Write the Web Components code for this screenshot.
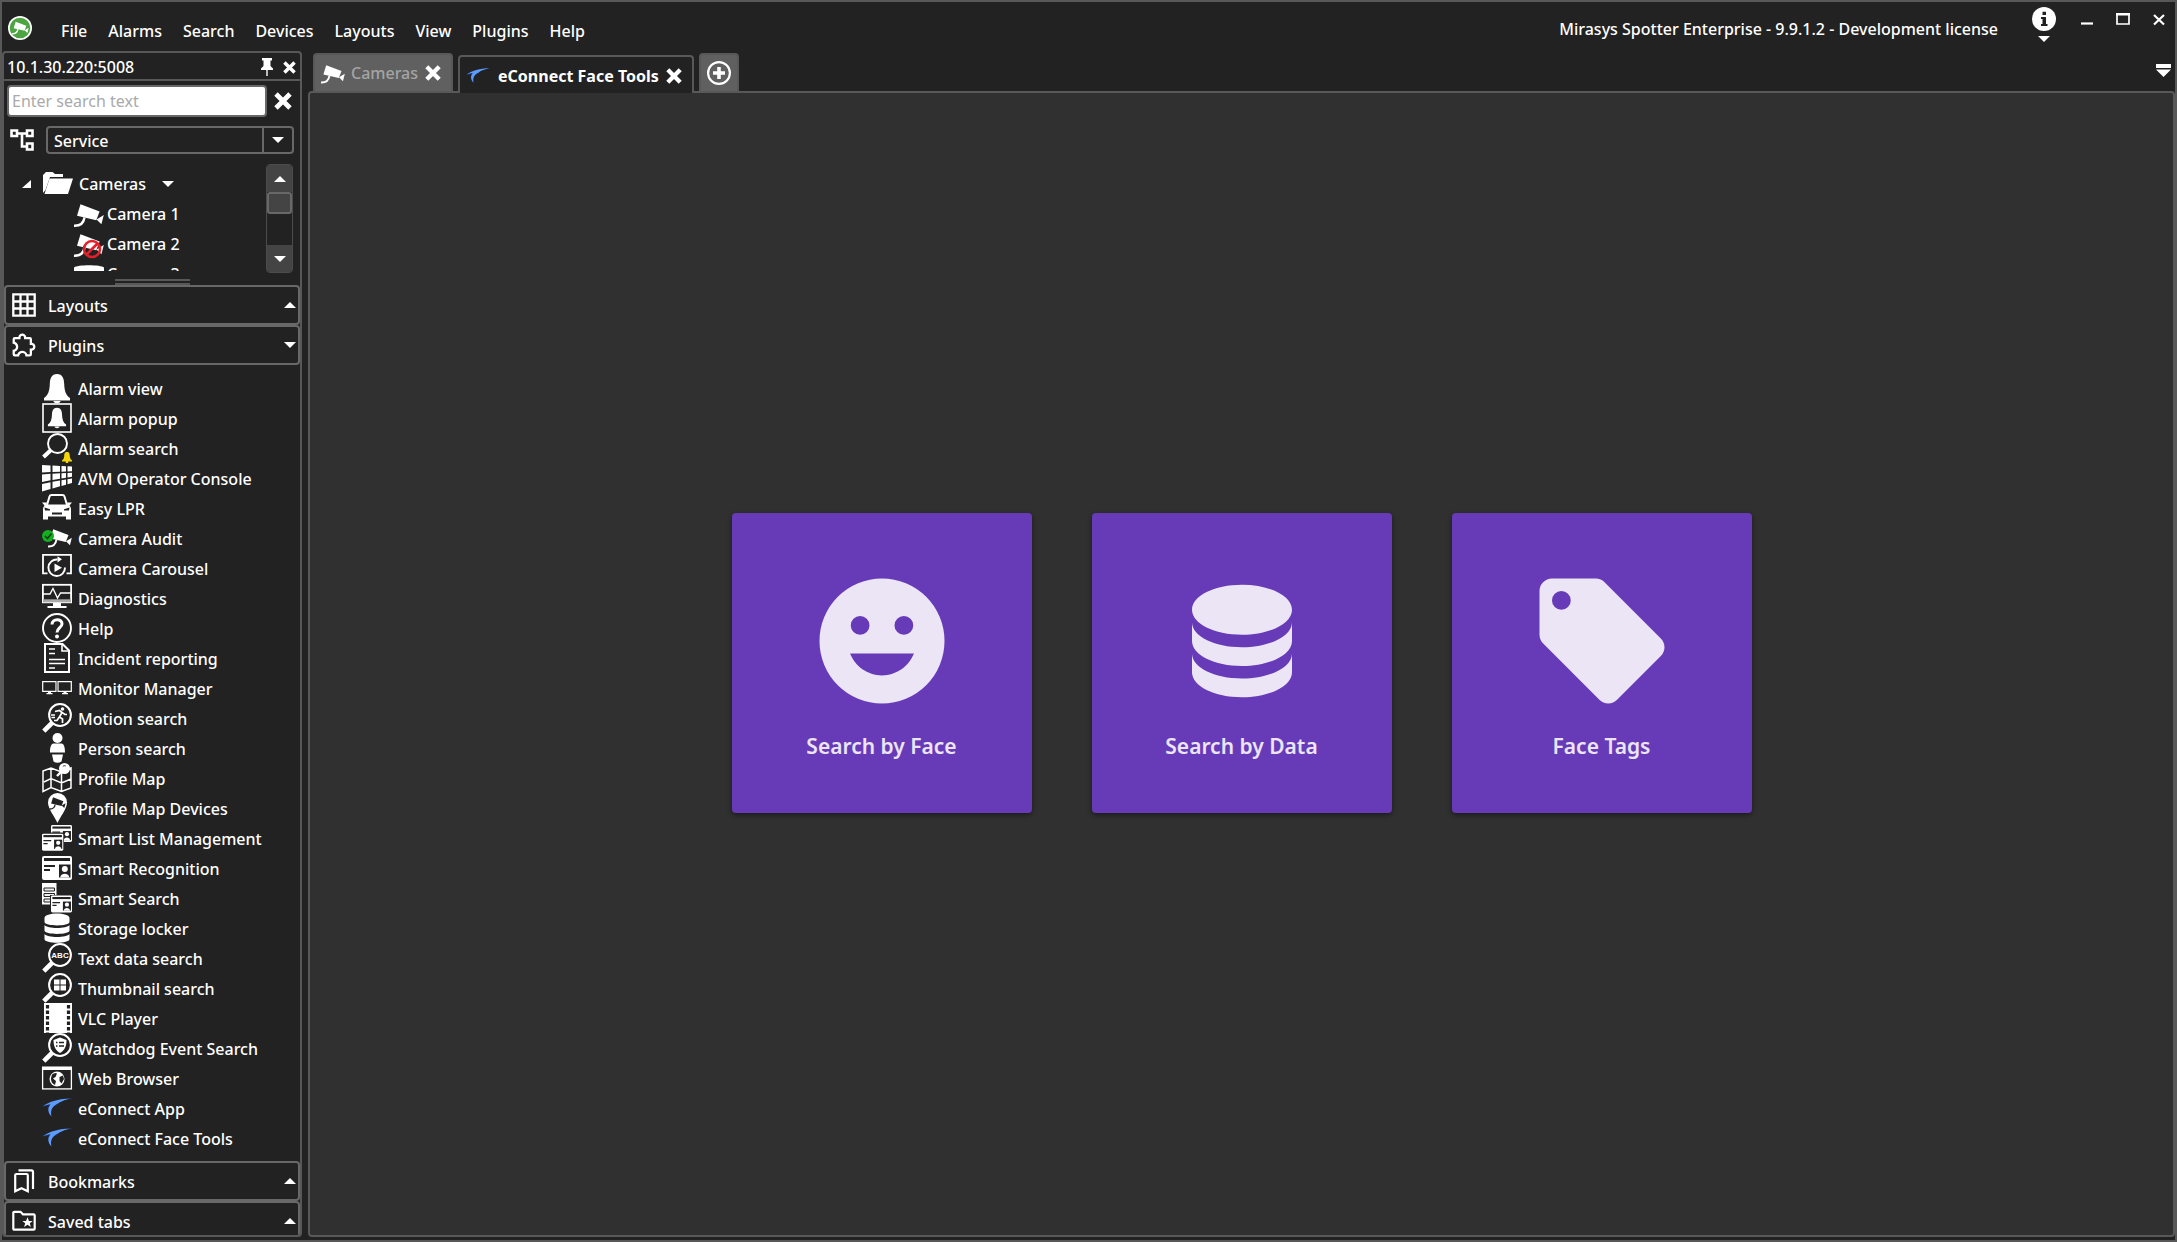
<!DOCTYPE html>
<html lang="en">
<head>
<meta charset="utf-8">
<title>Mirasys Spotter Enterprise</title>
<style>
  :root {
    --bg: #222222;
    --pane: #303030;
    --line: #585858;
    --line-soft: #686868;
    --raised: #444444;
    --tab: #606060;
  }
  html, body { height: 100%; }
  body {
    margin: 0;
    background: var(--bg);
    color: #fff;
    font: 500 16px/22px "Noto Sans", "Open Sans", sans-serif;
  }
</style>
</head>
<body>
<spotter-window>
  <title-bar slot="title">
    <menu-item>File</menu-item>
    <menu-item>Alarms</menu-item>
    <menu-item>Search</menu-item>
    <menu-item>Devices</menu-item>
    <menu-item>Layouts</menu-item>
    <menu-item>View</menu-item>
    <menu-item>Plugins</menu-item>
    <menu-item>Help</menu-item>
    <span slot="caption">Mirasys Spotter Enterprise - 9.9.1.2 - Development license</span>
  </title-bar>

  <side-panel slot="side">
    <span slot="heading">10.1.30.220:5008</span>
    <device-search slot="filter"></device-search>
    <device-tree slot="filter">
      <tree-node icon="folder" branch>Cameras</tree-node>
      <tree-node icon="camera">Camera 1</tree-node>
      <tree-node icon="camera-off">Camera 2</tree-node>
      <tree-node icon="dome">Camera 3</tree-node>
    </device-tree>
    <accordion-section icon="grid"><span slot="label">Layouts</span></accordion-section>
    <accordion-section icon="puzzle" open>
      <span slot="label">Plugins</span>
      <plugin-item icon="bell">Alarm view</plugin-item>
      <plugin-item icon="bell-box">Alarm popup</plugin-item>
      <plugin-item icon="alarm-search">Alarm search</plugin-item>
      <plugin-item icon="wall">AVM Operator Console</plugin-item>
      <plugin-item icon="car">Easy LPR</plugin-item>
      <plugin-item icon="audit">Camera Audit</plugin-item>
      <plugin-item icon="carousel">Camera Carousel</plugin-item>
      <plugin-item icon="diagnostics">Diagnostics</plugin-item>
      <plugin-item icon="help">Help</plugin-item>
      <plugin-item icon="report">Incident reporting</plugin-item>
      <plugin-item icon="monitors">Monitor Manager</plugin-item>
      <plugin-item icon="motion">Motion search</plugin-item>
      <plugin-item icon="person">Person search</plugin-item>
      <plugin-item icon="map">Profile Map</plugin-item>
      <plugin-item icon="map-pin">Profile Map Devices</plugin-item>
      <plugin-item icon="cards">Smart List Management</plugin-item>
      <plugin-item icon="card">Smart Recognition</plugin-item>
      <plugin-item icon="card-search">Smart Search</plugin-item>
      <plugin-item icon="storage">Storage locker</plugin-item>
      <plugin-item icon="text-search">Text data search</plugin-item>
      <plugin-item icon="thumb-search">Thumbnail search</plugin-item>
      <plugin-item icon="film">VLC Player</plugin-item>
      <plugin-item icon="watchdog">Watchdog Event Search</plugin-item>
      <plugin-item icon="browser">Web Browser</plugin-item>
      <plugin-item icon="swoosh">eConnect App</plugin-item>
      <plugin-item icon="swoosh">eConnect Face Tools</plugin-item>
    </accordion-section>
    <accordion-section icon="bookmarks"><span slot="label">Bookmarks</span></accordion-section>
    <accordion-section icon="folder-star"><span slot="label">Saved tabs</span></accordion-section>
  </side-panel>

  <tab-strip slot="tabs">
    <tab-item icon="camera">Cameras</tab-item>
    <tab-item icon="swoosh" active>eConnect Face Tools</tab-item>
  </tab-strip>

  <action-card slot="content" icon="face">Search by Face</action-card>
  <action-card slot="content" icon="database">Search by Data</action-card>
  <action-card slot="content" icon="tag">Face Tags</action-card>
</spotter-window>

<script>
const CAMERA = `<path d="M6.5 5.3 25.6 12.6 22.3 21.3 3 16.8Z"/><path d="M22.5 20.4 29.8 16 27.4 25.2Z"/>
  <path d="M0 26.8C5 27 9.500 25 10.500 18.500" fill="none" stroke="currentColor" stroke-width="2.400"/>`;
const BELL = `<path d="M15 1C9.500 1 8 5.500 7.800 11 7.600 18 6 22.500 2 25V27.400H28V25C24 22.500 22.400 18 22.200 11 22 5.500 20.500 1 15 1Z"/><path d="M11.500 28H18.500C18.500 31 11.500 31 11.500 28Z"/>`;
const LENS = `<path d="M1.800 28.200 10.500 19.500" stroke="currentColor" stroke-width="4.600" fill="none"/>
  <circle cx="18" cy="12" r="10.900" fill="none" stroke="currentColor" stroke-width="2"/>`;
const ID_CARD = `<rect x="0" y="3" width="30" height="24" rx="2"/>
  <path d="M2 6.500H28" stroke="#222" stroke-width="3"/>
  <path d="M2 13H13M2 17H8" stroke="#222" stroke-width="1.800"/>
  <rect x="17" y="11.500" width="11.500" height="13" fill="#222"/>
  <circle cx="22.800" cy="16" r="3"/><path d="M18.300 24.500C18.300 19.500 27.200 19.500 27.200 24.500Z"/>`;
const DRUM = `M12,3C7.580,3 4,4.790 4,7C4,9.210 7.580,11 12,11C16.420,11 20,9.210 20,7C20,4.790 16.420,3 12,3M4,9V12C4,14.210 7.580,16 12,16C16.420,16 20,14.210 20,12V9C20,11.210 16.420,13 12,13C7.580,13 4,11.210 4,9M4,14V17C4,19.210 7.580,21 12,21C16.420,21 20,19.210 20,17V14C20,16.210 16.420,18 12,18C7.580,18 4,16.210 4,14Z`;
const S = 'fill="none" stroke="currentColor"';

/* name: [viewBox, markup] */
const ICONS = {
  'logo': ['0 0 24 24', `<circle cx="12" cy="12" r="12"/><circle cx="12" cy="12" r="10.300" fill="#4ca541"/><g transform="translate(4 2.800) scale(.56)">${CAMERA}</g>`],
  'camera': ['0 0 30 30', CAMERA],
  'camera-off': ['0 0 30 30', `${CAMERA}<circle cx="18" cy="20" r="8" fill="none" stroke="#e3202b" stroke-width="2.600"/><path d="M12.500 25.500 23.500 14.500" stroke="#e3202b" stroke-width="2.600"/>`],
  'dome': ['0 0 30 30', `<path d="M0 12V8.500C3 5.500 27 5.500 30 8.500V12Z"/><path d="M4 13H26C26 25 4 25 4 13Z"/>`],
  'folder': ['0 0 30 30', `<path d="M0 24V6L3 3H9.500L12 5H20V8H7L2.500 21Z"/><path d="M6.500 9.500H30L25 25H1.500Z"/>`],
  'tree': ['0 0 24 24', `<path d="M1.500 2.500H7V8H1.500ZM17 2.500H22.500V8H17ZM17 15.500H22.500V21.500H17ZM7.500 5.500H16.500M12 5.500V18.500H16.500" ${S} stroke-width="2.600"/>`],
  'grid': ['0 0 24 24', `<path d="M1.300 1.300H22.700V22.700H1.300ZM8.500 1V23M15.500 1V23M1 8.500H23M1 15.500H23" ${S} stroke-width="2.300"/>`],
  'puzzle': ['1.500 1.500 21 21', `<path d="M22,13.500C22,15.260 20.700,16.720 19,16.960V20A2,2 0 0,1 17,22H13.200V21.700A2.700,2.700 0 0,0 10.500,19C9,19 7.800,20.210 7.800,21.700V22H4A2,2 0 0,1 2,20V16.200H2.300C3.790,16.200 5,15 5,13.500C5,12 3.790,10.800 2.300,10.800H2V7A2,2 0 0,1 4,5H7.040C7.280,3.300 8.740,2 10.500,2C12.260,2 13.720,3.300 13.960,5H17A2,2 0 0,1 19,7V10.040C20.700,10.280 22,11.740 22,13.500M17,15H18.500A1.500,1.500 0 0,0 20,13.500A1.500,1.500 0 0,0 18.500,12H17V7H12V5.500A1.500,1.500 0 0,0 10.500,4A1.500,1.500 0 0,0 9,5.500V7H4V9.120C5.760,9.800 7,11.500 7,13.500C7,15.500 5.750,17.200 4,17.880V20H6.120C6.800,18.250 8.500,17 10.500,17C12.500,17 14.200,18.250 14.880,20H17V15Z"/>`],
  'bookmarks': ['0 0 24 24', `<path d="M3.200 6.200Q3.200 5 4.400 5H14.600Q15.800 5 15.800 6.200V22.300L9.500 19.200 3.200 22.300ZM6.500 1.300H19.400Q21 1.300 21 3V20" ${S} stroke-width="2.200"/>`],
  'folder-star': ['0 0 24 24', `<path d="M1.300 4Q1.300 2.800 2.500 2.800H8.500L11 5.300H21.500Q22.700 5.300 22.700 6.500V19.500Q22.700 20.700 21.500 20.700H2.500Q1.300 20.700 1.300 19.500Z" ${S} stroke-width="2.200"/><path d="M15.500 8.200 17 12H20.700L17.800 14.300 18.900 18 15.500 15.800 12.100 18 13.200 14.300 10.300 12H14Z"/>`],
  'bell': ['0 0 30 30', BELL],
  'bell-box': ['0 0 30 30', `<rect x="1" y="1" width="28" height="28" ${S} stroke-width="1.600"/><g transform="translate(4.500 4) scale(.7)">${BELL}</g>`],
  'alarm-search': ['0 0 30 30', `<path d="M1.500 24 9 17" ${S} stroke-width="4"/><circle cx="15.500" cy="10.500" r="9.500" ${S} stroke-width="1.900"/><path d="M25 19C22.500 19 22.300 21 22.200 23.500Q22 26 20 27.500V28.500H30V27.500Q28 26 27.800 23.500C27.700 21 27.500 19 25 19ZM23.800 28.500H26.200V30H23.800Z" fill="#f4d40b"/>`],
  'wall': ['0 0 30 30', `<path d="M0 2 8.500 2.500V9L0 9.500ZM10.500 2.500 18 3V8.800L10.500 9ZM19.500 3 24 3.200V8.500L19.500 8.700ZM25.500 3.300 30 3.500V8.200L25.500 8.400ZM0 11.500 8.500 10.800V17.300L0 19ZM10.500 10.700 18 10.300V15.800L10.500 17ZM19.500 10.200 24 10V14.700L19.500 15.600ZM25.500 9.900 30 9.700V13.800L25.500 14.500ZM0 21 8.500 19.200V26L0 28.500ZM10.500 18.800 18 17.500V23.300L10.500 25.500ZM19.500 17.200 24 16.500V21.700L19.500 23ZM25.500 16.200 30 15.500V20L25.500 21.300Z"/>`],
  'car': ['0 0 30 30', `<path d="M5 12 7.500 3.500Q8 2 9.500 2H20.500Q22 2 22.500 3.500L25 12" ${S} stroke-width="2"/><path d="M0 9.500H5L4.500 11.500H25.500L25 9.500H30L27.500 12.500Q29 14 29 16V26.500H24V23.500H6V26.500H1V16Q1 14 2.500 12.500Z"/><path d="M2.500 14.500 8 16.200V17.500H3ZM27.500 14.500 22 16.200V17.500H27ZM10 19.500H20V21.500H10Z" fill="#222"/>`],
  'audit': ['0 0 30 30', `<g transform="translate(6 2) scale(.8)">${CAMERA}</g><circle cx="6" cy="13" r="6" fill="#12b01f"/><path d="M3 13 5.500 15.500 9.500 10.500" fill="none" stroke="#123f14" stroke-width="1.700"/>`],
  'carousel': ['0 0 30 30', `<path d="M5.500 20.300H1V1.800H29V20.300H24.500" ${S} stroke-width="1.800"/><path d="M15.500 6.500A8.300 8.300 0 1 0 23 14.500" ${S} stroke-width="1.900"/><path d="M15.500 3.200 20 6.200 15.500 9.500ZM12.500 10.500 20 14.800 12.500 19Z"/>`],
  'diagnostics': ['0 0 30 30', `<rect x=".900" y="1.800" width="28.200" height="17.500" ${S} stroke-width="1.800"/><path d="M1 17.800H29" stroke="#aaa" stroke-width="3"/><path d="M1 11H8L11 5.500 15.500 15 18.500 10H29" ${S} stroke-width="1.400"/><path d="M11 20H19V23H24.500V25H5.500V23H11Z"/>`],
  'help': ['0 0 30 30', `<circle cx="15" cy="15" r="14" ${S} stroke-width="1.900"/><path d="M10 11.500C10 5 20.300 5.200 20 11 19.800 14.500 15 15 15 19.500" ${S} stroke-width="3"/><circle cx="15" cy="23.500" r="2"/>`],
  'report': ['0 0 30 30', `<path d="M3 1H20.500L27 7.500V29H3Z" ${S} stroke-width="2"/><path d="M20 1V8H27" ${S} stroke-width="1.600"/><path d="M7 6H13M7 10.500H13M7 16.500H23M7 20.500H23M7 25H13" ${S} stroke-width="1.700"/>`],
  'monitors': ['0 0 30 30', `<path d="M.700 8.700H14V18.300H.700ZM16 8.700H29.300V18.300H16Z" ${S} stroke-width="1.200"/><path d="M15 8V19" stroke="#999" stroke-width="2"/><path d="M6 18.500H9V20H10.500V21.300H4.500V20H6ZM21.500 18.500H24.500V20H26V21.300H20V20H21.500Z"/>`],
  'motion': ['0 0 30 30', `${LENS}<circle cx="20.500" cy="6" r="1.800"/><path d="M13 8.500 17.500 7.500 20 9.500 17.500 14 20.500 16V20M18 13 15 17.500H12M20 9.500 23 11.500H25M9 12H13M9.500 14.500H13" ${S} stroke-width="1.700"/>`],
  'person': ['0 0 30 30', `<circle cx="15.500" cy="5" r="5"/><path d="M11.500 10.500H19.500C22 11 23 14 23 19.500H8C8 14 9 11 11.500 10.500ZM10 21.500H21L19.500 28.500Q15.500 31 11.500 28.500Z"/>`],
  'map': ['0 0 30 30', `<path d="M1 8 9 5 19.500 9 29 5V25L19.500 28.500 9 24.500 1 28.500ZM9 5.500V24.500M19.500 9V28M2 19 9 15.500 19.500 20 29 16" ${S} stroke-width="1.500"/><circle cx="22.500" cy="5.500" r="5.500"/><path d="M19 9 15 13" ${S} stroke-width="2.400"/><path d="M21 3.500Q22 2 24 3" fill="none" stroke="#777" stroke-width="1.200"/>`],
  'map-pin': ['0 0 30 30', `<path d="M15.500 0A9.500 9.500 0 0 1 25 9.500C25 16 18 24 15.500 30 13 24 6 16 6 9.500A9.500 9.500 0 0 1 15.500 0Z"/><g transform="translate(7.500 1.500) scale(.54)" color="#222" fill="#222">${CAMERA}</g>`],
  'cards': ['0 0 30 30', `<g transform="translate(9 0) scale(.7)">${ID_CARD}</g><rect x="-1" y="9.500" width="23" height="18.500" rx="1.500" fill="#222"/><g transform="translate(0 8.500) scale(.71)">${ID_CARD}</g>`],
  'card': ['0 0 30 30', ID_CARD],
  'card-search': ['0 0 30 30', `<path d="M0 0H14.500V21.500H0Z"/><path d="M2 5H12.500V8H2ZM2 10.500H12.500V13.500H2ZM2 16H12.500V19H2Z" fill="#eee" stroke="#222" stroke-width="1"/><rect x="8" y="12" width="22" height="18" fill="#222"/><g transform="translate(9 10.500) scale(.7)">${ID_CARD}</g>`],
  'storage': ['0 0 30 30', `<path d="M2.500 5C2.500-1 27.500-1 27.500 5V9C27.500 13.500 2.500 13.500 2.500 9ZM2.500 12C5 16 25 16 27.500 12V17.500C27.500 22 2.500 22 2.500 17.500ZM2.500 21C5 25 25 25 27.500 21V26C27.500 31 2.500 31 2.500 26Z"/>`],
  'text-search': ['0 0 30 30', `${LENS}<text x="18" y="14.800" text-anchor="middle" font-family="Liberation Sans" font-weight="700" font-size="8">ABC</text>`],
  'thumb-search': ['0 0 30 30', `${LENS}<path d="M12 6.500H17.500V11.500H12ZM18.500 6.500H24V11.500H18.500ZM12 12.500H17.500V17.500H12ZM18.500 12.500H24V17.500H18.500Z"/>`],
  'film': ['0 0 30 30', `<path d="M2 0H30V30H2Z"/><path d="M5.500 2V30M26.500 2V30" stroke="#222" stroke-width="3.200" stroke-dasharray="3.500 2"/>`],
  'watchdog': ['0 0 30 30', `${LENS}<path d="M18 4.500 24.500 7C24.500 13.500 22.500 17.500 18 20 13.500 17.500 11.500 13.500 11.500 7Z"/><path d="M14 9.500H15.500M17 9.500H22M14 13H15.500M17 13H22" stroke="#222" stroke-width="1.500"/>`],
  'browser': ['0 0 30 30', `<rect x=".600" y="4.600" width="28.800" height="21.300" ${S} stroke-width="1.300"/><path d="M0 3.500H30V7H0Z"/><circle cx="15" cy="16" r="7.500"/><path d="M10 11.500Q13 9 15 10.500L13.500 14 11 15.500 14 18 13 22Q8.500 20 9 15ZM17.500 14 21 12.500 22 16 19.500 20.500 17.500 18Z" fill="#222"/>`],
  'swoosh': ['0 0 30 30', `<path d="M0 13C8 14 16 13 23 10.500 16 12 8 13 2 11ZM24 6 30 5V6.500Z" fill="#1b2c55"/><path d="M29 5.400C18 5.400 6 8.500 1 13.500 4 12 6 11.500 8.500 11.500 5 15 6 20 9.500 23.500 8 17.500 10.500 12.800 16 10.500 18 8.800 22 7 29 5.400Z" fill="#5b9bff"/>`],
  'close': ['0 0 18 18', `<path d="M2 2 16 16M16 2 2 16" ${S} stroke-width="4.800"/>`],
  'pin': ['0 0 18 18', `<path d="M4 0H14V2.500H12.500V8L15 10.500V12H3V10.500L5.500 8V2.500H4ZM8.300 12H9.700V18H8.300Z"/>`],
  'plus': ['0 0 24 24', `<circle cx="12" cy="12" r="10.900" ${S} stroke-width="2.200"/><path d="M12 6V18M6 12H18" ${S} stroke-width="3.600"/>`],
  'info': ['0 0 24 24', `<circle cx="12" cy="12" r="12"/><path d="M10.500 4.700H14V8H10.500ZM9 10H14V17H15.500V19H9V17H10.500V12H9Z" fill="#222"/>`],
  'minimize': ['0 0 14 14', `<path d="M1 11.500H13" ${S} stroke-width="2.200"/>`],
  'maximize': ['0 0 14 14', `<path d="M1 2H13V12H1Z" ${S} stroke-width="1.700"/><path d="M0 1H14V3.500H0Z"/>`],
  'quit': ['0 0 14 14', `<path d="M2 3 12 12.500M12 3 2 12.500" ${S} stroke-width="2.200"/>`],
  'down': ['0 0 12 12', `<path d="M0 3H12L6 9Z"/>`],
  'up': ['0 0 12 12', `<path d="M0 9H12L6 3Z"/>`],
  'expanded': ['0 0 12 12', `<path d="M10 2V10H1Z"/>`],
  'overflow': ['0 0 16 16', `<path d="M0 1H15V5H0ZM0 6.500H15L7.500 14Z"/>`],
  'face': ['0 0 24 24', `<path fill-rule="evenodd" d="M12 2A10 10 0 0 1 12 22A10 10 0 0 1 12 2ZM8.500 11A1.500 1.500 0 0 0 8.500 8A1.500 1.500 0 0 0 8.500 11ZM15.500 11A1.500 1.500 0 0 0 15.500 8A1.500 1.500 0 0 0 15.500 11ZM12 17.500C14.330 17.500 16.300 16.040 17.110 14H6.890C7.690 16.040 9.670 17.500 12 17.500Z"/>`],
  'database': ['0 0 24 24', `<path d="${DRUM}"/>`],
  'tag': ['0 0 24 24', `<path d="M5.500,7A1.500,1.500 0 0,1 4,5.500A1.500,1.500 0 0,1 5.500,4A1.500,1.500 0 0,1 7,5.500A1.500,1.500 0 0,1 5.500,7M21.410,11.580L12.410,2.580C12.050,2.220 11.550,2 11,2H4C2.890,2 2,2.890 2,4V11C2,11.550 2.220,12.050 2.590,12.410L11.580,21.410C11.950,21.770 12.450,22 13,22C13.550,22 14.050,21.770 14.410,21.410L21.410,14.410C21.780,14.050 22,13.550 22,13C22,12.440 21.770,11.940 21.410,11.580Z"/>`],
};

const RESET = `
  *, *::before { box-sizing: border-box; }
  button, input, select { margin: 0; padding: 0; border: 0; background: none; color: inherit; font: inherit; text-align: left; outline-offset: -2px; }
`;

function define(name, template) {
  customElements.define(name, class extends HTMLElement {
    connectedCallback() {
      if (this.shadowRoot) return;
      this.attachShadow({ mode: 'open' }).innerHTML = template(this);
    }
  });
}

define('ui-icon', el => {
  const [box, art] = ICONS[el.getAttribute('name')];
  return `<style>
    :host { display: block; flex: none; width: var(--size, 24px); height: var(--size, 24px); }
    svg { display: block; width: 100%; height: 100%; fill: currentColor; overflow: visible; }
  </style><svg viewBox="${box}" aria-hidden="true">${art}</svg>`;
});

define('spotter-window', () => `<style>${RESET}
  :host {
    display: grid; box-sizing: border-box; height: 100vh; overflow: hidden;
    grid-template: 49px minmax(0, 1fr) / 300px minmax(0, 1fr);
    column-gap: 6px; padding-bottom: 3px; border: 2px solid var(--line);
  }
  header { grid-column: 1 / -1; min-width: 0; }
  aside { min-height: 0; }
  .work { display: flex; flex-direction: column; min-height: 0; }
  main {
    flex: 1; display: flex; align-items: center; justify-content: center; gap: 60px; padding-bottom: 2px;
    background: var(--pane); border: 2px solid var(--line); border-radius: 4px;
  }
</style>
<header><slot name="title"></slot></header>
<aside><slot name="side"></slot></aside>
<div class="work"><slot name="tabs"></slot><main><slot name="content"></slot></main></div>`);

define('title-bar', () => `<style>${RESET}
  :host { display: flex; justify-content: space-between; height: 100%; }
  nav { display: flex; align-items: center; gap: 1px; padding-left: 6px; padding-top: 9px; }
  ui-icon { margin: 0 18px 6px 0; }
  .right { display: flex; align-items: flex-start; padding: 5px 9px 0 0; }
  .caption { padding: 11px 34px 0 0; white-space: nowrap; }
  .info { display: grid; justify-items: center; gap: 2px; margin-right: 24px; }
  .info ui-icon { margin: 0; }
  .info ui-icon + ui-icon { --size: 12px; }
  .win { margin: 5px 0 0 22px; --size: 14px; }
  .win.first { margin-left: 0; }
  .win ui-icon { margin: 0; }
</style>
<nav aria-label="Main menu"><ui-icon name="logo"></ui-icon><slot></slot></nav>
<div class="right">
  <div class="caption"><slot name="caption"></slot></div>
  <button class="info" aria-label="Information"><ui-icon name="info"></ui-icon><ui-icon name="down"></ui-icon></button>
  <button class="win first" aria-label="Minimize"><ui-icon name="minimize"></ui-icon></button>
  <button class="win" aria-label="Maximize"><ui-icon name="maximize"></ui-icon></button>
  <button class="win" aria-label="Close"><ui-icon name="quit"></ui-icon></button>
</div>`);

define('menu-item', () => `<style>${RESET}
  button { padding: 0 10px; white-space: nowrap; }
</style><button><slot></slot></button>`);

define('side-panel', () => `<style>${RESET}
  :host { display: flex; flex-direction: column; box-sizing: border-box; height: 100%; overflow: hidden;
    border: 2px solid var(--line); border-radius: 4px; }
  .head { flex: none; display: flex; align-items: center; height: 28px; padding: 2px 4px 0 3px; border-bottom: 2px solid var(--line); }
  .head span { flex: 1; }
  .head button { --size: 18px; }
  .head button + button { margin-left: 7px; --size: 13px; }
  .grip { flex: none; align-self: center; width: 75px; height: 6px; margin-top: 6px; border: solid var(--line); border-width: 2px 0; }
</style>
<div class="head"><span><slot name="heading"></slot></span>
  <button aria-label="Pin panel"><ui-icon name="pin"></ui-icon></button>
  <button aria-label="Close panel"><ui-icon name="close"></ui-icon></button></div>
<slot name="filter"></slot>
<div class="grip"></div>
<slot></slot>`);

define('device-search', () => `<style>${RESET}
  :host { display: block; flex: none; padding: 4px 6px 0 3px; }
  .row { display: flex; align-items: center; }
  input { flex: 1; min-width: 0; height: 32px; padding: 0 3px; color: #222; font-weight: 400; background: #fff; border: 2px solid var(--line-soft); border-radius: 4px; }
  input::placeholder { color: #aaa; opacity: 1; }
  .clear { margin: 0 2px 0 7px; --size: 18px; }
  .row + .row { margin-top: 9px; padding-left: 3px; }
  .mode { flex: 1; display: grid; grid-template-columns: minmax(0, 1fr) 30px; align-items: center; height: 28px; margin-left: 12px;
    border: 2px solid var(--line-soft); border-radius: 4px; }
  select { grid-area: 1 / 1 / 2 / 3; height: 24px; padding: 1px 36px 0 6px; appearance: none; }
  option { color: #222; }
  .arrow { grid-area: 1 / 2; display: grid; place-items: center; height: 24px; border-left: 2px solid var(--line-soft); pointer-events: none; --size: 12px; }
</style>
<div class="row"><input type="text" placeholder="Enter search text" aria-label="Search devices">
  <button class="clear" aria-label="Clear search"><ui-icon name="close"></ui-icon></button></div>
<div class="row"><ui-icon name="tree"></ui-icon>
  <div class="mode"><select aria-label="Group devices by"><option>Service</option></select>
  <span class="arrow"><ui-icon name="down"></ui-icon></span></div></div>`);

define('device-tree', () => `<style>${RESET}
  :host { display: flex; flex: none; height: 109px; margin-top: 10px; padding-right: 7px; }
  .list { flex: 1; height: 107px; padding-top: 5px; overflow: hidden; }
  .bar { display: flex; flex-direction: column; width: 27px; border: 1px solid #4c4c4c; border-radius: 4px; overflow: hidden; --size: 12px; }
  .bar button { display: grid; place-items: center; height: 27px; background: var(--raised); }
  .thumb { height: 22px; background: var(--raised); border: 2px solid var(--line-soft); border-radius: 3px; }
  .track { flex: 1; }
</style>
<div class="list"><slot></slot></div>
<div class="bar">
  <button aria-label="Scroll up"><ui-icon name="up"></ui-icon></button>
  <div class="thumb"></div><div class="track"></div>
  <button aria-label="Scroll down"><ui-icon name="down"></ui-icon></button>
</div>`);

define('tree-node', el => `<style>${RESET}
  :host { display: block; }
  button { display: flex; align-items: center; width: 100%; height: 30px; padding-left: 70px; gap: 3px; white-space: nowrap; --size: 30px; }
  button.branch { padding-left: 17px; gap: 0; }
  .twist { --size: 12px; margin-right: 10px; }
  .drop { --size: 12px; margin-left: 16px; }
  .branch .label { margin-left: 6px; }
</style>
<button class="${el.hasAttribute('branch') ? 'branch' : ''}">
  ${el.hasAttribute('branch') ? '<ui-icon class="twist" name="expanded"></ui-icon>' : ''}
  <ui-icon name="${el.getAttribute('icon')}"></ui-icon><span class="label"><slot></slot></span>
  ${el.hasAttribute('branch') ? '<ui-icon class="drop" name="down"></ui-icon>' : ''}
</button>`);

define('accordion-section', el => `<style>${RESET}
  :host { display: block; flex: none; }
  button { display: flex; align-items: center; width: 100%; height: 40px; padding: 0 2px 0 6px; border: 2px solid var(--line-soft); border-radius: 4px; }
  .label { flex: 1; margin-left: 12px; padding-top: 2px; }
  .caret { --size: 12px; }
  .body { padding: 8px 0; }
</style>
<button aria-expanded="${el.hasAttribute('open')}"><ui-icon name="${el.getAttribute('icon')}"></ui-icon>
  <span class="label"><slot name="label"></slot></span>
  <ui-icon class="caret" name="${el.hasAttribute('open') ? 'down' : 'up'}"></ui-icon></button>
${el.hasAttribute('open') ? '<div class="body"><slot></slot></div>' : ''}`);

define('plugin-item', el => `<style>${RESET}
  :host { display: block; }
  button { display: flex; align-items: center; gap: 6px; width: 100%; height: 30px; padding-left: 38px; white-space: nowrap; --size: 30px; }
  span { padding-top: 2px; }
</style><button><ui-icon name="${el.getAttribute('icon')}"></ui-icon><span><slot></slot></span></button>`);

define('tab-strip', () => `<style>${RESET}
  :host { display: flex; flex: none; align-items: flex-end; gap: 5px; height: 40px; padding: 0 3px 0 5px; }
  .add { display: grid; place-items: center; width: 40px; height: 38px; background: var(--tab); border: 2px solid var(--line); border-bottom: 0; border-radius: 4px 4px 0 0; }
  .more { margin: 0 0 12px auto; --size: 16px; }
</style>
<slot></slot>
<button class="add" aria-label="New tab"><ui-icon name="plus"></ui-icon></button>
<button class="more" aria-label="All tabs"><ui-icon name="overflow"></ui-icon></button>`);

define('tab-item', el => `<style>${RESET}
  :host { display: flex; align-items: center; box-sizing: border-box; height: 38px; padding: 0 10px 0 6px;
    color: #a4a4a4; background: var(--tab); border: 2px solid var(--line); border-bottom: 0; border-radius: 4px 4px 0 0; }
  :host([active]) { z-index: 1; margin-bottom: -2px; color: #fff; font-weight: 700; background: var(--bg); padding-top: 2px; }
  .pick { display: flex; align-items: center; gap: 6px; white-space: nowrap; }
  :host([active]) .pick { gap: 8px; }
  .pick ui-icon, .shut { color: #fff; }
  .shut { margin-left: 7px; --size: 16px; }
</style>
<button class="pick"><ui-icon name="${el.getAttribute('icon')}"></ui-icon><span><slot></slot></span></button>
<button class="shut" aria-label="Close tab"><ui-icon name="close"></ui-icon></button>`);

define('action-card', el => `<style>${RESET}
  :host { display: block; }
  button { display: flex; flex-direction: column; align-items: center; width: 300px; height: 300px; padding-top: 53px;
    color: #ebe5f5; background: #673ab7; border-radius: 4px; box-shadow: 0 2px 5px rgba(0, 0, 0, .45);
    font-size: 21px; line-height: 30px; font-weight: 600; --size: 150px; }
  span { margin-top: 15px; }
</style><button><ui-icon name="${el.getAttribute('icon')}"></ui-icon><span><slot></slot></span></button>`);
</script>
</body>
</html>
